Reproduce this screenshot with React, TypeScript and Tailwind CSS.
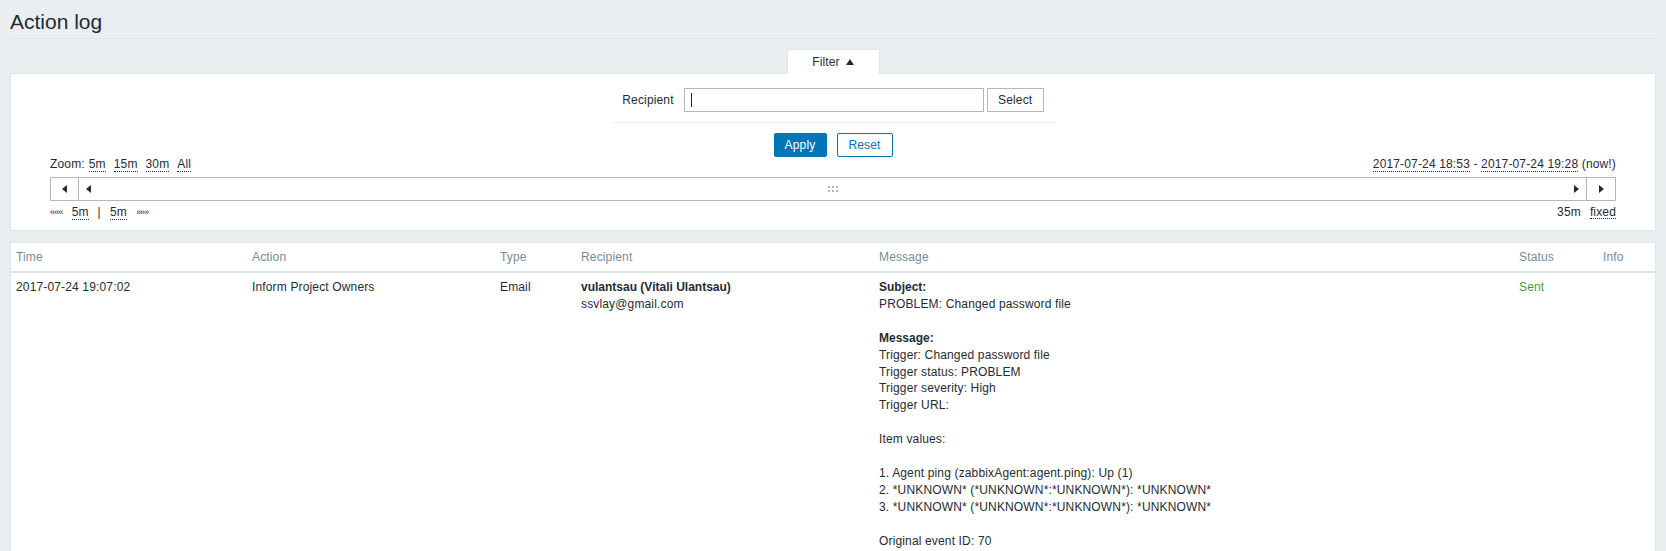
import React from "react";

const Lnk = ({ children }: { children: React.ReactNode }) => (
  <span className="border-b border-dotted border-[#1f2c33]">{children}</span>
);

const Arrow = ({ dir }: { dir: "left" | "right" }) => (
  <svg width="5" height="8" viewBox="0 0 5 8" className="fill-[#1f2c33]">
    {dir === "left" ? <path d="M5 0v8L0 4z" /> : <path d="M0 0v8l5-4z" />}
  </svg>
);

const messageLines: { text: string; bold?: boolean }[] = [
  { text: "Subject:", bold: true },
  { text: "PROBLEM: Changed password file" },
  { text: "" },
  { text: "Message:", bold: true },
  { text: "Trigger: Changed password file" },
  { text: "Trigger status: PROBLEM" },
  { text: "Trigger severity: High" },
  { text: "Trigger URL:" },
  { text: "" },
  { text: "Item values:" },
  { text: "" },
  { text: "1. Agent ping (zabbixAgent:agent.ping): Up (1)" },
  { text: "2. *UNKNOWN* (*UNKNOWN*:*UNKNOWN*): *UNKNOWN*" },
  { text: "3. *UNKNOWN* (*UNKNOWN*:*UNKNOWN*): *UNKNOWN*" },
  { text: "" },
  { text: "Original event ID: 70" },
];

const cols = "grid grid-cols-[236px_248px_81px_298px_640px_84px_1fr]";

export default function App() {
  return (
    <div className="h-screen overflow-hidden bg-[#ebeef0] px-[10px] text-[12px] tracking-[0.15px] text-[#1f2c33] font-['Liberation_Sans',Arial,sans-serif]">
      {/* header */}
      <div className="h-[39px] border-b border-[#dfe4e7] pt-[10px]">
        <h1 className="text-[21px] leading-[24px] font-normal tracking-normal">Action log</h1>
      </div>

      {/* filter tab */}
      <div className="mt-[10px] flex justify-center">
        <div className="-mb-px flex h-[25px] w-[93px] items-center justify-center gap-[6px] border border-b-0 border-[#dfe4e7] bg-white">
          <span>Filter</span>
          <svg width="8" height="6" viewBox="0 0 8 6" className="fill-[#1f2c33]">
            <path d="M0 6h8L4 0z" />
          </svg>
        </div>
      </div>

      {/* filter box */}
      <div className="border border-[#dfe4e7] bg-white px-[39px] pt-[14px] pb-[11px]">
        <div className="flex items-center justify-center">
          <span className="mr-[10px]">Recipient</span>
          <div className="flex h-[24px] w-[300px] items-center border border-[#acbbc2] bg-white px-[6px]">
            <span className="h-[14px] w-px bg-[#1f2c33]" />
          </div>
          <button className="ml-[3px] h-[24px] w-[57px] border border-[#acbbc2] bg-white text-[12px] tracking-[0.15px] text-[#1f2c33]">
            Select
          </button>
        </div>
        <div className="mx-auto mt-[10px] h-px w-[442px] bg-[#ebeef0]" />
        <div className="mt-[10px] flex justify-center gap-[10px]">
          <button className="h-[24px] w-[53px] rounded-[2px] bg-[#0275b8] text-[12px] tracking-[0.15px] text-white">Apply</button>
          <button className="h-[24px] w-[56px] rounded-[2px] border border-[#0275b8] bg-white text-[12px] tracking-[0.15px] text-[#0275b8]">
            Reset
          </button>
        </div>

        {/* zoom row */}
        <div className="mt-0 flex h-[14px] justify-between leading-[14px]">
          <div className="flex">
            <span>Zoom:</span>
            <span className="ml-[4px]"><Lnk>5m</Lnk></span>
            <span className="ml-[8px]"><Lnk>15m</Lnk></span>
            <span className="ml-[8px]"><Lnk>30m</Lnk></span>
            <span className="ml-[8px]"><Lnk>All</Lnk></span>
          </div>
          <div>
            <Lnk>2017-07-24 18:53</Lnk> - <Lnk>2017-07-24 19:28</Lnk> (now!)
          </div>
        </div>

        {/* slider */}
        <div className="mt-[6px] flex h-[24px]">
          <div className="flex w-[29px] items-center justify-center border border-[#acbbc2]">
            <Arrow dir="left" />
          </div>
          <div className="-ml-px flex flex-1 items-center justify-between border border-[#acbbc2] px-[7px]">
            <Arrow dir="left" />
            <svg width="10" height="6" viewBox="0 0 10 6" className="fill-[#acbbc2]">
              <rect x="0" y="0" width="2" height="2" />
              <rect x="4" y="0" width="2" height="2" />
              <rect x="8" y="0" width="2" height="2" />
              <rect x="0" y="4" width="2" height="2" />
              <rect x="4" y="4" width="2" height="2" />
              <rect x="8" y="4" width="2" height="2" />
            </svg>
            <Arrow dir="right" />
          </div>
          <div className="-ml-px flex w-[30px] items-center justify-center border border-[#acbbc2]">
            <Arrow dir="right" />
          </div>
        </div>

        {/* bottom row */}
        <div className="mt-[4px] flex h-[14px] justify-between leading-[14px]">
          <div className="flex items-center gap-[9px]">
            <span className="text-[9px] leading-[14px] tracking-[-0.8px]">«««</span>
            <Lnk>5m</Lnk>
            <span>|</span>
            <Lnk>5m</Lnk>
            <span className="text-[9px] leading-[14px] tracking-[-0.8px]">»»»</span>
          </div>
          <div className="flex gap-[9px]">
            <span>35m</span>
            <Lnk>fixed</Lnk>
          </div>
        </div>
      </div>

      {/* table */}
      <div className="mt-[11px] min-h-[340px] border border-[#dfe4e7] bg-white">
        <div className={`${cols} h-[30px] items-center border-b-2 border-[#dfe4e7] text-[#768d99]`}>
          <div className="px-[5px]">Time</div>
          <div className="px-[5px]">Action</div>
          <div className="px-[5px]">Type</div>
          <div className="px-[5px]">Recipient</div>
          <div className="px-[5px]">Message</div>
          <div className="px-[5px]">Status</div>
          <div className="px-[5px]">Info</div>
        </div>
        <div className={`${cols} pt-[6px] leading-[16.9px]`}>
          <div className="px-[5px]">2017-07-24 19:07:02</div>
          <div className="px-[5px]">Inform Project Owners</div>
          <div className="px-[5px]">Email</div>
          <div className="px-[5px]">
            <div className="font-bold tracking-normal">vulantsau (Vitali Ulantsau)</div>
            <div>ssvlay@gmail.com</div>
          </div>
          <div className="px-[5px]">
            {messageLines.map((l, i) =>
              l.text === "" ? (
                <div key={i} className="h-[16.9px]" />
              ) : (
                <div key={i} className={l.bold ? "font-bold tracking-normal" : ""}>
                  {l.text}
                </div>
              )
            )}
          </div>
          <div className="px-[5px] text-[#429e47]">Sent</div>
          <div className="px-[5px]"></div>
        </div>
      </div>
    </div>
  );
}
